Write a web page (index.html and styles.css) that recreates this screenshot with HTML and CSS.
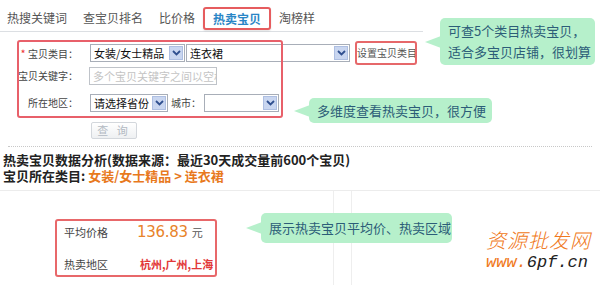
FILE: index.html
```html
<!DOCTYPE html>
<html lang="zh-CN">
<head>
<meta charset="utf-8">
<title>热卖宝贝</title>
<link rel="stylesheet" href="styles.css">
</head>
<body>
<div class="page">
  <nav class="tabs">
    <span class="tab">热搜关键词</span>
    <span class="tab">查宝贝排名</span>
    <span class="tab">比价格</span>
    <span class="tab active">热卖宝贝</span>
    <span class="tab">淘榜样</span>
  </nav>

  <div class="form">
    <div class="row">
      <label class="lbl"><i class="req">*</i> 宝贝类目：</label>
      <div class="sel w1"><span class="val">女装/女士精品</span><span class="arr"><svg width="9" height="6" viewBox="0 0 9 6"><path d="M1 1 L4.5 4.5 L8 1" fill="none" stroke="#2f4f8f" stroke-width="1.8"/></svg></span></div>
      <div class="sel w2"><span class="val">连衣裙</span><span class="arr"><svg width="9" height="6" viewBox="0 0 9 6"><path d="M1 1 L4.5 4.5 L8 1" fill="none" stroke="#2f4f8f" stroke-width="1.8"/></svg></span></div>
      <a class="setcat">设置宝贝类目</a>
    </div>
    <div class="row">
      <label class="lbl">宝贝关键字：</label>
      <div class="input"><span class="ph">多个宝贝关键字之间以空格</span></div>
    </div>
    <div class="row region">
      <label class="lbl">所在地区：</label>
      <div class="sel w3"><span class="val">请选择省份</span><span class="arr"><svg width="9" height="6" viewBox="0 0 9 6"><path d="M1 1 L4.5 4.5 L8 1" fill="none" stroke="#2f4f8f" stroke-width="1.8"/></svg></span></div>
      <span class="city">城市：</span>
      <div class="sel w4"><span class="val"></span><span class="arr"><svg width="9" height="6" viewBox="0 0 9 6"><path d="M1 1 L4.5 4.5 L8 1" fill="none" stroke="#2f4f8f" stroke-width="1.8"/></svg></span></div>
    </div>
    <div class="row actions">
      <button class="query">查 询</button>
    </div>
  </div>

  <div class="divider"></div>

  <div class="summary">
    <p class="title">热卖宝贝数据分析(数据来源：最近30天成交量前600个宝贝)</p>
    <p class="cat">宝贝所在类目: <em>女装/女士精品 &gt; 连衣裙</em></p>
  </div>

  <div class="panel">
    <div class="col main">
      <div class="stats">
        <div class="srow"><span class="skey">平均价格</span><span class="price">136.83</span><span class="unit">元</span></div>
        <div class="srow"><span class="skey">热卖地区</span><span class="areas">杭州,广州,上海</span></div>
      </div>
    </div>
    <div class="col narrow"></div>
    <div class="col rest"></div>
  </div>

  <div class="form-hl"></div>

  <div class="bubble b1">可查5个类目热卖宝贝，<br>适合多宝贝店铺，很划算</div>
  <div class="bubble b2">多维度查看热卖宝贝，很方便</div>
  <div class="bubble b3">展示热卖宝贝平均价、热卖区域</div>

  <div class="watermark">
    <div class="wm-name">资源批发网</div>
    <div class="wm-url"><span class="wm-www">www.</span>6pf.cn</div>
  </div>
</div>
</body>
</html>
```

FILE: styles.css
```css
* { box-sizing: border-box; }
html, body { margin: 0; padding: 0; background: #fff; }
body { font-family: "Noto Sans CJK SC", "Noto Sans", sans-serif; color: #333; }

.page {
  position: relative;
  width: 600px;
  height: 285px;
  overflow: hidden;
  background: #fff;
}

/* tabs */
.tabs {
  display: flex;
  align-items: flex-start;
  gap: 16px;
  width: 423px;
  height: 32px;
  padding: 7px 0 0 7px;
  border-bottom: 1px solid #dcdfe3;
}
.tab {
  font-size: 12px;
  line-height: 19px;
  padding-top: 1px;
  color: #555;
  white-space: nowrap;
}
.tab.active {
  padding: 0 8px;
  margin: 0 -8px;
  border: 2px solid #e65c5e;
  border-radius: 3px;
  color: #2a86c6;
  font-weight: bold;
  box-shadow: 0 1px 2px rgba(0,0,0,0.12);
  background: #fff;
}

/* form */
.form { padding-top: 12px; }
.row {
  display: flex;
  align-items: center;
  height: 18px;
}
.row + .row { margin-top: 5px; }
.row.region { margin-top: 9px; }
.row.actions { margin-top: 10px; height: 17px; padding-left: 91px; }
.lbl {
  width: 78px;
  margin-right: 12px;
  text-align: right;
  font-size: 10px;
  line-height: 14px;
  color: #444;
  white-space: nowrap;
}
.req { font-style: normal; color: #e33; font-size: 11px; }

.sel {
  display: flex;
  align-items: stretch;
  height: 18px;
  border: 1px solid #a8aeb8;
  background: #fff;
}
.sel .val {
  flex: 1;
  min-width: 0;
  padding-left: 3px;
  font-size: 11px;
  line-height: 16px;
  color: #111;
  white-space: nowrap;
  overflow: hidden;
}
.sel .arr {
  flex: none;
  width: 14px;
  margin: 1px;
  display: flex;
  align-items: center;
  justify-content: center;
  background: #c9d6f0;
  border: 1px solid #aebfe2;
}
.w1 { width: 95px; }
.w2 { width: 164px; margin-left: 1px; }
.w3 { width: 78px; }
.w4 { width: 75px; }

.setcat {
  margin: -3px 0 -3px 5px;
  height: 24px;
  width: 62px;
  border: 2px solid #e6686a;
  border-radius: 3px;
  font-size: 10px;
  line-height: 20px;
  color: #555;
  text-align: center;
  white-space: nowrap;
  overflow: hidden;
}
.input {
  width: 128px;
  height: 18px;
  margin-left: -1px;
  padding-left: 3px;
  border: 1px solid #bfc3c9;
  overflow: hidden;
  white-space: nowrap;
  font-size: 11px;
  line-height: 16px;
}
.ph { color: #c4c4c4; }
.city {
  margin: 0 3px 0 3px;
  font-size: 10px;
  line-height: 14px;
  color: #444;
  white-space: nowrap;
}
.query {
  width: 46px;
  height: 17px;
  padding: 0;
  border: 1px solid #d3d7dc;
  border-radius: 2px;
  background: linear-gradient(#ffffff, #eef0f2);
  font-family: inherit;
  font-size: 11px;
  line-height: 15px;
  color: #b3bac3;
  letter-spacing: 3px;
}

.divider {
  margin: 7px 8px 0;
  border-top: 1px dotted #c8c8c8;
}

.summary { padding: 5px 0 0 3px; }
.summary p {
  margin: 0;
  font-size: 13px;
  line-height: 16px;
  font-weight: bold;
  color: #222;
  white-space: nowrap;
}
.summary em { font-style: normal; color: #e8791d; }

.panel {
  display: flex;
  margin-top: 6px;
  height: 100px;
  border-top: 1px solid #ececec;
}
.col.main { width: 334px; border-right: 1px solid #eeeeee; padding: 28px 0 0 55px; }
.col.narrow { width: 18px; border-right: 1px solid #eeeeee; }
.col.rest { flex: 1; }

.stats {
  width: 162px;
  height: 58px;
  border: 2px solid #e8686a;
  border-radius: 3px;
  padding: 0 0 0 7px;
  display: flex;
  flex-direction: column;
  gap: 10px;
}
.srow {
  display: flex;
  align-items: center;
  height: 22px;
  white-space: nowrap;
}
.skey { font-size: 11px; color: #444; width: 44px; }
.price {
  margin-left: 29px;
  font-family: "DejaVu Sans", "Liberation Sans", sans-serif;
  font-size: 15px;
  color: #e8832a;
  letter-spacing: -0.3px;
}
.unit { margin-left: 4px; font-size: 11px; color: #555; }
.areas { margin-left: 32px; font-size: 11px; font-weight: bold; color: #e23838; }

/* annotation overlays */
.form-hl {
  position: absolute;
  left: 17px;
  top: 40px;
  width: 266px;
  height: 78px;
  border: 2px solid #e8606a;
  border-radius: 3px;
  pointer-events: none;
}

.bubble {
  position: absolute;
  background: #b6f0cb;
  border-radius: 5px;
  padding-left: 8px;
  font-size: 13px;
  color: #2c5d78;
  white-space: nowrap;
}
.bubble::before {
  content: "";
  position: absolute;
  top: 50%;
  left: -15px;
  margin-top: -6px;
  border-style: solid;
  border-width: 6px 16px 6px 0;
  border-color: transparent #b6f0cb transparent transparent;
}
.b1 { left: 440px; top: 18px; width: 155px; height: 47px; line-height: 21px; padding-top: 2px; }
.b2 { left: 309px; top: 98px; width: 183px; height: 25px; line-height: 25px; }
.b3 { left: 261px; top: 213px; width: 191px; height: 30px; line-height: 30px; }

.watermark {
  position: absolute;
  left: 486px;
  top: 226px;
  color: #f07820;
}
.wm-name {
  font-size: 20px;
  line-height: 27px;
  letter-spacing: 1px;
  font-weight: 300;
  font-style: italic;
}
.wm-url {
  font-family: "Liberation Mono", monospace;
  font-size: 17px;
  line-height: 19px;
  color: #222;
  font-style: italic;
}
.wm-www { color: #f07820; }
```
